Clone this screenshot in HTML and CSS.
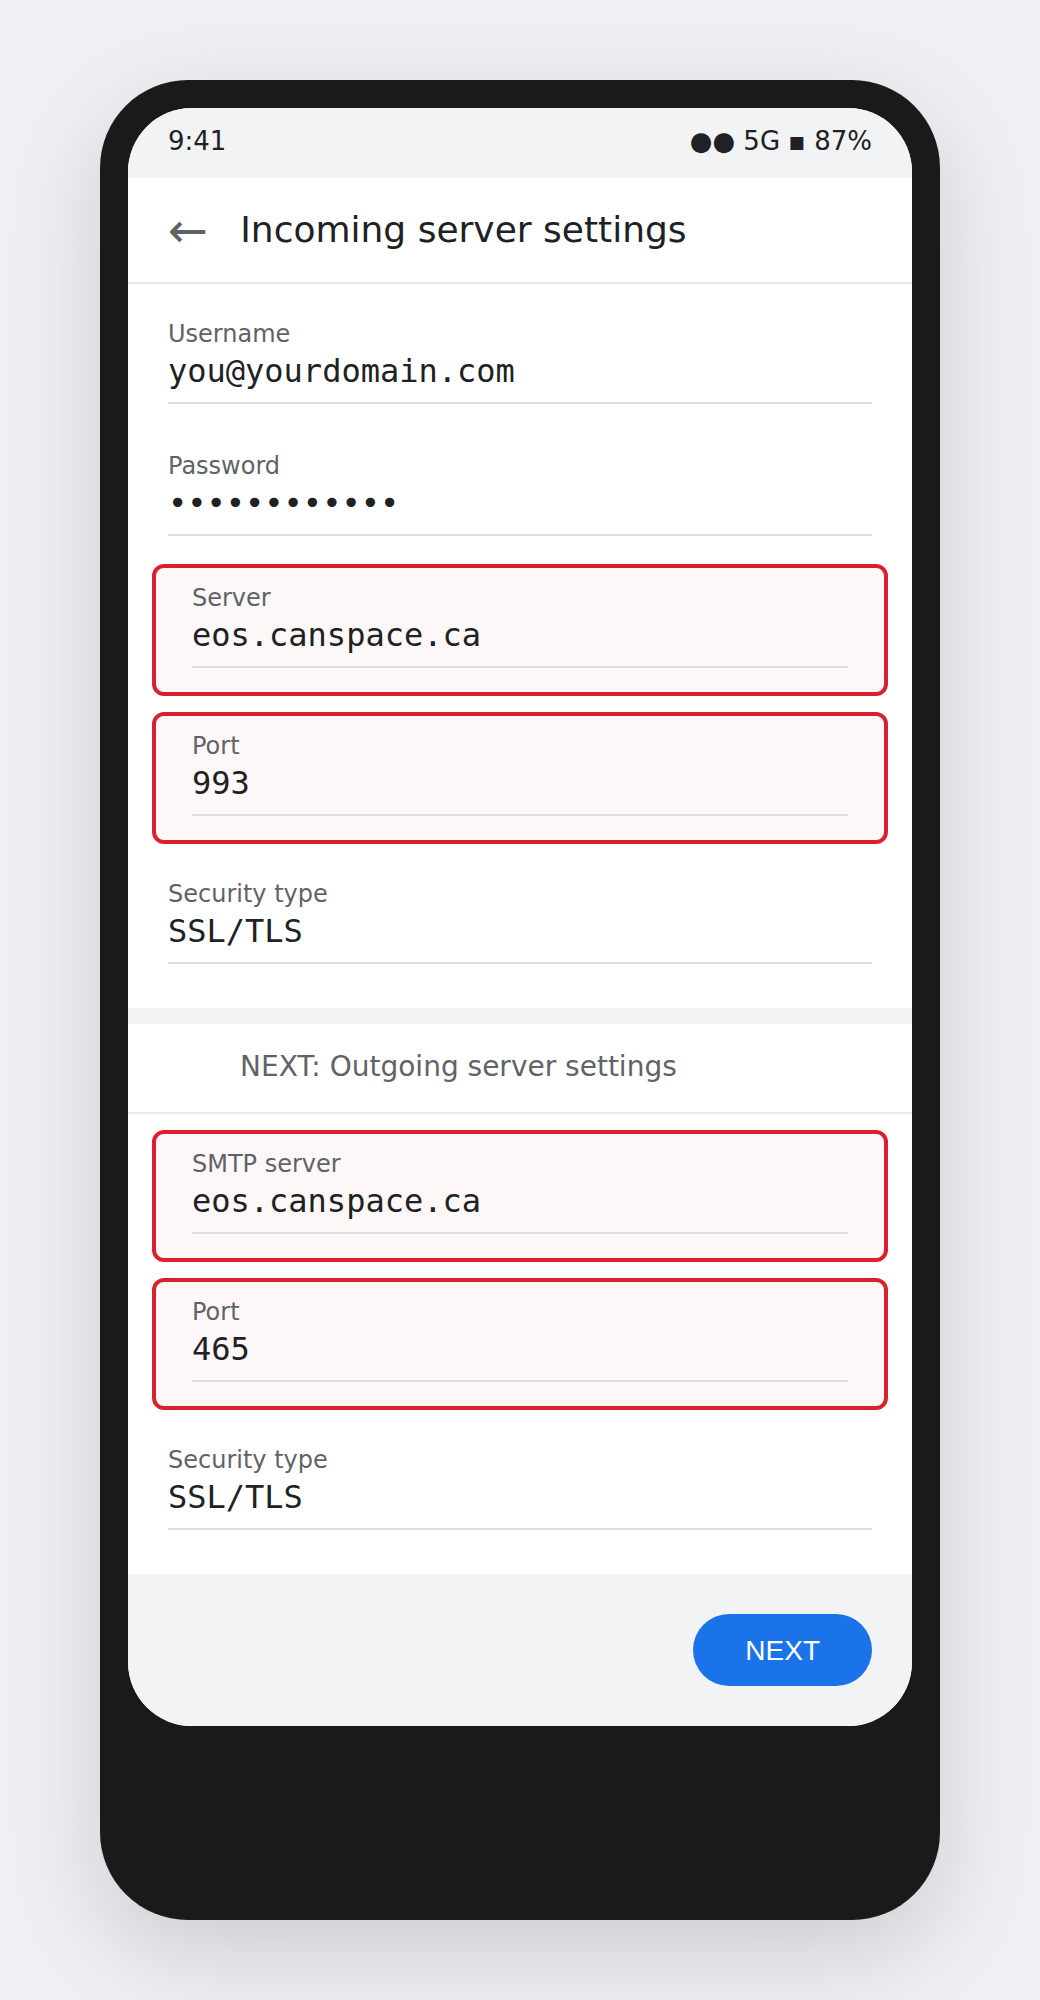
FILE: index.html
```html
<!DOCTYPE html>
<html lang="en">
<head>
<meta charset="utf-8">
<meta name="viewport" content="width=device-width, initial-scale=1">
<title>Incoming server settings</title>
<link rel="stylesheet" href="styles.css">
</head>
<body>
<main class="phone">
  <form class="screen">
    <div class="status-bar">
      <span>9:41</span>
      <span>●● 5G ▪ 87%</span>
    </div>
    <header class="app-bar">
      <button class="back" type="button" aria-label="Back">←</button>
      <h1 class="title">Incoming server settings</h1>
    </header>
    <section class="fields">
      <div class="field">
        <label class="label" for="username">Username</label>
        <input class="value" id="username" type="text" value="you@yourdomain.com">
      </div>
      <div class="field">
        <label class="label" for="password">Password</label>
        <input class="value" id="password" type="password" value="abcdefghijkl">
      </div>
      <div class="field highlight">
        <label class="label" for="in-server">Server</label>
        <input class="value" id="in-server" type="text" value="eos.canspace.ca">
      </div>
      <div class="field highlight">
        <label class="label" for="in-port">Port</label>
        <input class="value" id="in-port" type="text" value="993">
      </div>
      <div class="field">
        <label class="label" for="in-security">Security type</label>
        <select class="value" id="in-security"><option>SSL/TLS</option></select>
      </div>
    </section>
    <h2 class="subtitle">NEXT: Outgoing server settings</h2>
    <section class="fields">
      <div class="field highlight">
        <label class="label" for="out-server">SMTP server</label>
        <input class="value" id="out-server" type="text" value="eos.canspace.ca">
      </div>
      <div class="field highlight">
        <label class="label" for="out-port">Port</label>
        <input class="value" id="out-port" type="text" value="465">
      </div>
      <div class="field">
        <label class="label" for="out-security">Security type</label>
        <select class="value" id="out-security"><option>SSL/TLS</option></select>
      </div>
    </section>
    <footer class="actions">
      <button class="next" type="button">NEXT</button>
    </footer>
  </form>
</main>
</body>
</html>
```
FILE: styles.css
```css
* {
  box-sizing: border-box;
}

body {
  margin: 0;
  padding: 80px;
  background: #f0eff4;
  color: #202124;
  font-family: "DejaVu Sans", sans-serif;
}

.phone {
  max-width: 840px;
  min-height: calc(100vh - 160px);
  margin: 0 auto;
  padding: 28px;
  border-radius: 88px;
  background: #1a1a1a;
  box-shadow: 0 32px 96px rgba(0, 0, 0, 0.15);
}

.screen {
  overflow: hidden;
  border-radius: 64px;
  background: #fff;
}

.status-bar {
  display: flex;
  justify-content: space-between;
  padding: 18px 40px 22px;
  background: #f1f3f4;
  font-size: 26px;
  line-height: 30px;
}

.app-bar {
  display: flex;
  align-items: center;
  gap: 32px;
  padding: 24px 40px;
  border-bottom: 2px solid #e8eaed;
}

.back {
  padding: 0;
  border: 0;
  background: none;
  color: #5f6368;
  font-family: inherit;
  font-size: 48px;
  line-height: 56px;
}

.title {
  margin: 0;
  font-size: 36px;
  font-weight: 400;
  line-height: 42px;
}

.subtitle {
  margin: 0;
  padding: 26px 40px 28px 112px;
  border-top: 16px solid #f1f3f4;
  border-bottom: 2px solid #e8eaed;
  color: #5f6368;
  font-size: 28px;
  font-weight: 400;
  line-height: 34px;
}

.fields {
  padding: 16px 0;
}

.field {
  display: flex;
  flex-direction: column;
  gap: 4px;
  padding: 20px 40px 28px;
}

.highlight {
  margin: 0 24px 16px;
  padding: 16px 36px 24px;
  border: 4px solid #dc1f2e;
  border-radius: 12px;
  background: #fdf7f7;
}

.label {
  color: #5f6368;
  font-size: 24px;
  line-height: 28px;
}

.value {
  width: 100%;
  height: 52px;
  padding: 0 0 12px;
  border: 0;
  border-bottom: 2px solid #dadce0;
  border-radius: 0;
  outline: 0;
  appearance: none;
  background: none;
  color: inherit;
  font-family: "DejaVu Sans Mono", monospace;
  font-size: 32px;
  line-height: 38px;
}

.actions {
  display: flex;
  justify-content: flex-end;
  padding: 40px;
  background: #f1f3f4;
}

.next {
  padding: 20px 52px 18px;
  border: 0;
  border-radius: 36px;
  background: #1a73e8;
  color: #fff;
  font-family: "Liberation Sans", Arial, sans-serif;
  font-size: 28px;
  line-height: 34px;
}
```
